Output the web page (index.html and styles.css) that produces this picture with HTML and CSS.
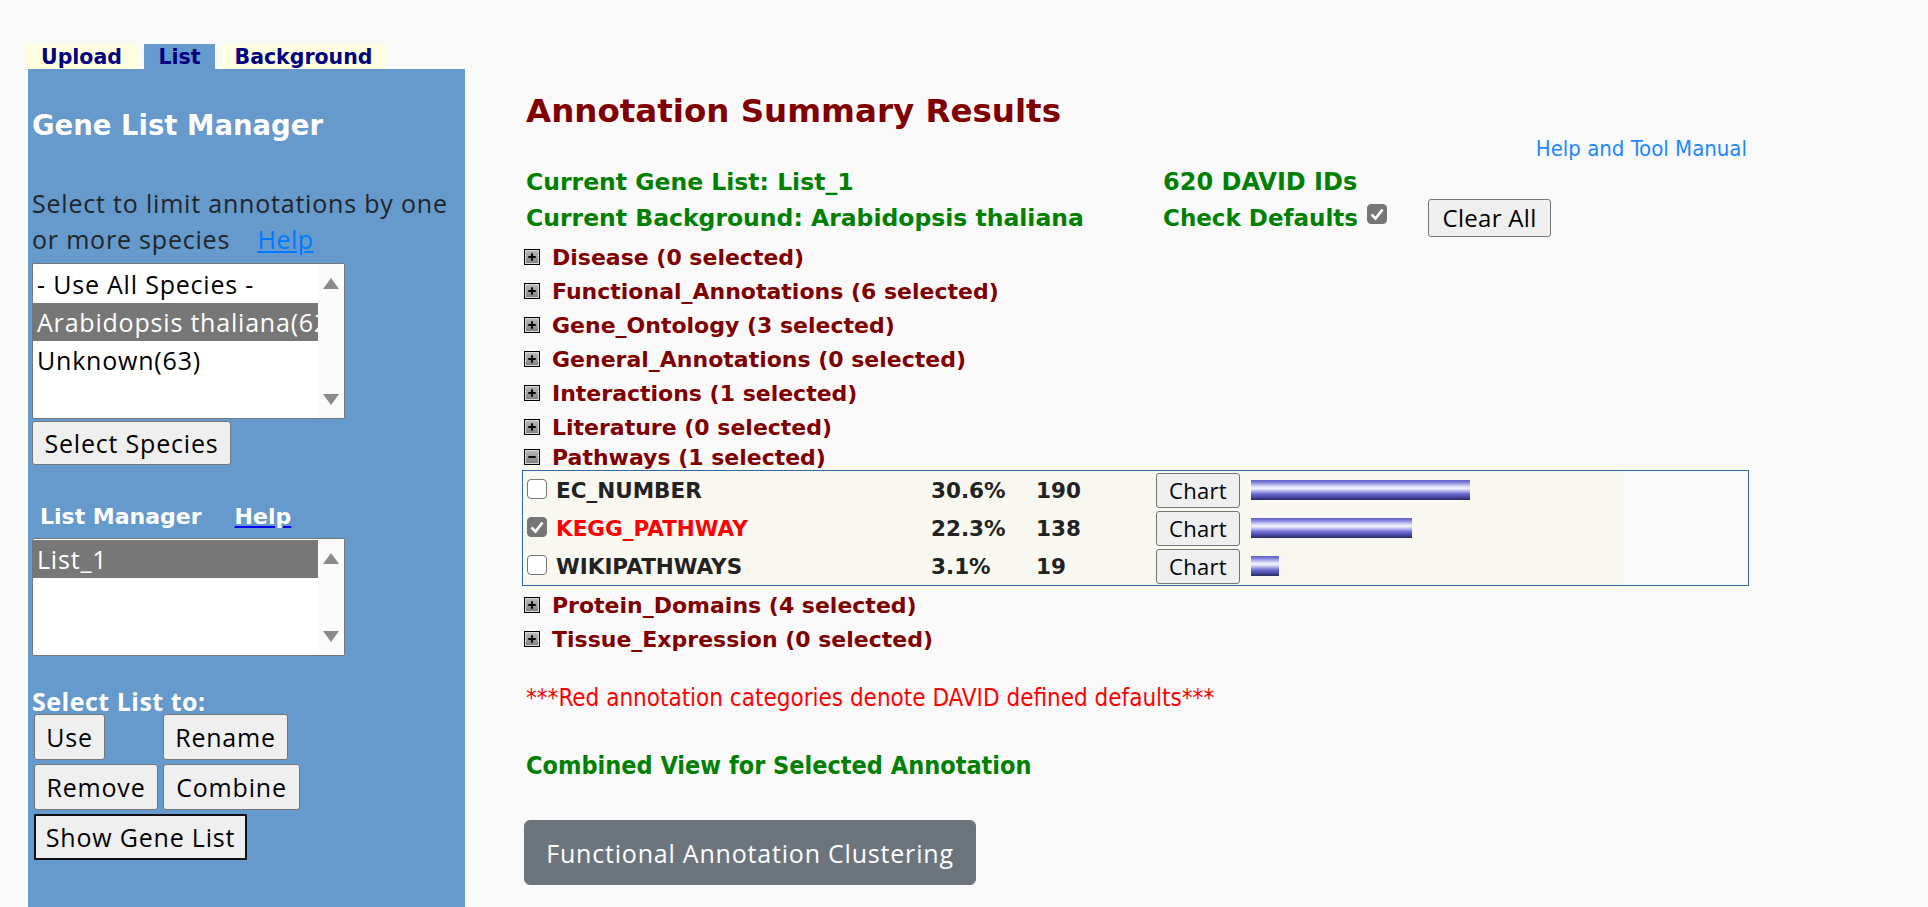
FILE: index.html
```html
<!DOCTYPE html>
<html>
<head>
<meta charset="utf-8">
<title>DAVID Annotation Summary</title>
<link rel="stylesheet" href="styles.css">
</head>
<body>
<div class="page">
  <aside class="side">
    <div class="tabs">
      <span class="tab tab-upload">Upload</span>
      <span class="tab tab-list">List</span>
      <span class="tab tab-bg">Background</span>
    </div>
    <div class="panel">
      <h2 class="panel-title">Gene List Manager</h2>
      <p class="panel-text">Select to limit annotations by one or more species <a class="help-link" href="#">Help</a></p>
      <div class="listbox species-box">
        <div class="lb-options">
          <div class="lb-opt">- Use All Species -</div>
          <div class="lb-opt lb-sel">Arabidopsis thaliana(620)</div>
          <div class="lb-opt">Unknown(63)</div>
        </div>
        <div class="lb-scroll">
          <span class="arrow-up"></span>
          <span class="arrow-down"></span>
        </div>
      </div>
      <button class="btn btn-species">Select Species</button>
      <div class="lm-head"><span class="lm-title">List Manager</span><a class="lm-help" href="#">Help</a></div>
      <div class="listbox list-box">
        <div class="lb-options">
          <div class="lb-opt lb-sel">List_1</div>
        </div>
        <div class="lb-scroll">
          <span class="arrow-up"></span>
          <span class="arrow-down"></span>
        </div>
      </div>
      <div class="sel-title">Select List to:</div>
      <div class="btn-grid">
        <button class="btn">Use</button>
        <button class="btn">Rename</button>
        <button class="btn">Remove</button>
        <button class="btn">Combine</button>
        <button class="btn btn-focus">Show Gene List</button>
      </div>
    </div>
  </aside>

  <main class="main">
    <h1 class="title">Annotation Summary Results</h1>
    <div class="help-row"><a class="manual" href="#">Help and Tool Manual</a></div>
    <div class="info">
      <div class="info-c1">Current Gene List: List_1</div>
      <div class="info-c2">620 DAVID IDs</div>
      <div></div>
      <div class="info-c1">Current Background: Arabidopsis thaliana</div>
      <div class="info-c2 info-check">Check Defaults<span class="cb cb-on cb-def"><svg viewBox="0 0 20 20" width="20" height="20"><path d="M4.5 10.5 L8.5 14.5 L15.5 5.5" fill="none" stroke="#fff" stroke-width="2.6"/></svg></span></div>
      <div><button class="btn btn-clear">Clear All</button></div>
    </div>

    <div class="cats">
      <div class="cat"><span class="pm"><svg viewBox="0 0 13 13" width="13" height="13"><path d="M2.5 6.5h8M6.5 2.5v8" stroke="#000" stroke-width="2"/></svg></span>Disease (0 selected)</div>
      <div class="cat"><span class="pm"><svg viewBox="0 0 13 13" width="13" height="13"><path d="M2.5 6.5h8M6.5 2.5v8" stroke="#000" stroke-width="2"/></svg></span>Functional_Annotations (6 selected)</div>
      <div class="cat"><span class="pm"><svg viewBox="0 0 13 13" width="13" height="13"><path d="M2.5 6.5h8M6.5 2.5v8" stroke="#000" stroke-width="2"/></svg></span>Gene_Ontology (3 selected)</div>
      <div class="cat"><span class="pm"><svg viewBox="0 0 13 13" width="13" height="13"><path d="M2.5 6.5h8M6.5 2.5v8" stroke="#000" stroke-width="2"/></svg></span>General_Annotations (0 selected)</div>
      <div class="cat"><span class="pm"><svg viewBox="0 0 13 13" width="13" height="13"><path d="M2.5 6.5h8M6.5 2.5v8" stroke="#000" stroke-width="2"/></svg></span>Interactions (1 selected)</div>
      <div class="cat"><span class="pm"><svg viewBox="0 0 13 13" width="13" height="13"><path d="M2.5 6.5h8M6.5 2.5v8" stroke="#000" stroke-width="2"/></svg></span>Literature (0 selected)</div>
      <div class="cat cat-open"><span class="pm"><svg viewBox="0 0 13 13" width="13" height="13"><path d="M2.5 6.5h8" stroke="#000" stroke-width="2"/></svg></span>Pathways (1 selected)</div>
      <div class="ptable">
        <div class="prow">
          <span class="cb"></span>
          <span class="pname">EC_NUMBER</span>
          <span class="ppct">30.6%</span>
          <span class="pcnt">190</span>
          <button class="btn btn-chart">Chart</button>
          <span class="bar" style="width:219px"></span>
        </div>
        <div class="prow">
          <span class="cb cb-on"><svg viewBox="0 0 20 20" width="20" height="20"><path d="M4.5 10.5 L8.5 14.5 L15.5 5.5" fill="none" stroke="#fff" stroke-width="2.6"/></svg></span>
          <span class="pname pname-def">KEGG_PATHWAY</span>
          <span class="ppct">22.3%</span>
          <span class="pcnt">138</span>
          <button class="btn btn-chart">Chart</button>
          <span class="bar" style="width:161px"></span>
        </div>
        <div class="prow">
          <span class="cb"></span>
          <span class="pname">WIKIPATHWAYS</span>
          <span class="ppct">3.1%</span>
          <span class="pcnt">19</span>
          <button class="btn btn-chart">Chart</button>
          <span class="bar" style="width:28px"></span>
        </div>
      </div>
      <div class="cat"><span class="pm"><svg viewBox="0 0 13 13" width="13" height="13"><path d="M2.5 6.5h8M6.5 2.5v8" stroke="#000" stroke-width="2"/></svg></span>Protein_Domains (4 selected)</div>
      <div class="cat"><span class="pm"><svg viewBox="0 0 13 13" width="13" height="13"><path d="M2.5 6.5h8M6.5 2.5v8" stroke="#000" stroke-width="2"/></svg></span>Tissue_Expression (0 selected)</div>
    </div>

    <p class="note">***Red annotation categories denote DAVID defined defaults***</p>
    <p class="combined">Combined View for Selected Annotation</p>
    <button class="btn-cluster">Functional Annotation Clustering</button>
  </main>
</div>
</body>
</html>
```

FILE: styles.css
```css
* { box-sizing: border-box; }
html, body { margin: 0; padding: 0; }
body {
  background: #f9f9f9;
  font-family: "Open Sans", "Noto Sans", sans-serif;
  color: #212529;
  overflow: hidden;
}
.page {
  display: flex;
  align-items: stretch;
  min-height: 907px;
  padding: 44px 0 0 26px;
}

/* ---------- sidebar ---------- */
.side {
  width: 439px;
  flex: none;
  display: flex;
  flex-direction: column;
}
.tabs {
  display: flex;
  gap: 7px;
  height: 25px;
}
.tab {
  font-family: "DejaVu Sans", sans-serif;
  font-weight: bold;
  font-size: 20.5px;
  line-height: 26px;
  color: #000080;
  background: #ffffe0;
  text-align: center;
}
.tab-upload { width: 111px; }
.tab-list { width: 71px; background: #6699cc; }
.tab-bg { width: 163px; }
.panel {
  flex: 1;
  margin-left: 2px;
  width: 437px;
  background: #6699cc;
  padding: 0 4px;
  display: flex;
  flex-direction: column;
  align-items: flex-start;
}
.panel-title {
  margin: 40px 0 0;
  font-family: "DejaVu Sans", sans-serif;
  font-weight: bold;
  font-size: 27.5px;
  line-height: 32px;
  color: #fff;
}
.panel-text {
  margin: 44px 0 0;
  font-size: 25px;
  letter-spacing: 0.8px;
  line-height: 36px;
  color: #212529;
  width: 430px;
}
.help-link {
  color: #007bff;
  margin-left: 20px;
  letter-spacing: 0.5px;
}
.listbox {
  display: flex;
  width: 313px;
  background: #fff;
  border: 1px solid #767676;
  border-radius: 2px;
  overflow: hidden;
}
.species-box { margin-top: 6px; height: 156px; }
.list-box { margin-top: 7px; height: 118px; }
.lb-options {
  flex: 1;
  min-width: 0;
  padding-top: 1px;
  overflow: hidden;
}
.lb-opt {
  height: 38px;
  line-height: 38px;
  font-size: 25px;
  letter-spacing: 0.8px;
  padding-left: 4px;
  color: #000;
  white-space: nowrap;
  overflow: hidden;
}
.lb-sel { background: #777; color: #fff; }
.lb-scroll {
  width: 26px;
  flex: none;
  background: #fafafa;
  display: flex;
  flex-direction: column;
  justify-content: space-between;
  align-items: center;
  padding: 14px 0 13px;
}
.arrow-up {
  width: 0; height: 0;
  border-left: 8px solid transparent;
  border-right: 8px solid transparent;
  border-bottom: 11px solid #8a8a8a;
}
.arrow-down {
  width: 0; height: 0;
  border-left: 8px solid transparent;
  border-right: 8px solid transparent;
  border-top: 11px solid #8a8a8a;
}
.btn {
  font-family: "Open Sans", "Noto Sans", sans-serif;
  font-size: 25px;
  letter-spacing: 0.8px;
  color: #000;
  background: #efefef;
  border: 1px solid #767676;
  border-radius: 3px;
  height: 46px;
  padding: 0;
  margin: 0;
}
.btn-species { margin-top: 2px; height: 44px; width: 199px; }
.lm-head {
  margin-top: 38px;
  height: 28px;
  line-height: 28px;
  padding-left: 8px;
  font-family: "DejaVu Sans", sans-serif;
  font-weight: bold;
  font-size: 22px;
  color: #fff;
}
.lm-help {
  color: #fff;
  margin-left: 33px;
  text-decoration-color: #0000ee;
}
.sel-title {
  margin-top: 32px;
  height: 26px;
  line-height: 26px;
  font-weight: bold;
  font-size: 25px;
  letter-spacing: 0.5px;
  color: #fff;
}
.btn-grid {
  display: grid;
  grid-template-columns: 125px auto;
  column-gap: 4px;
  row-gap: 4px;
  margin-left: 2px;
  justify-items: start;
}
.btn-grid .btn:nth-child(1) { width: 71px; }
.btn-grid .btn:nth-child(2) { width: 125px; }
.btn-grid .btn:nth-child(3) { width: 124px; }
.btn-grid .btn:nth-child(4) { width: 137px; }
.btn-focus {
  grid-column: 1 / span 2;
  width: 213px;
  border: 2px solid #111;
  border-radius: 1px;
}

/* ---------- main ---------- */
.main {
  margin-left: 61px;
  width: 1227px;
  flex: none;
}
.title {
  margin: 47px 0 0;
  font-family: "DejaVu Sans", sans-serif;
  font-weight: bold;
  font-size: 32.5px;
  line-height: 40px;
  color: #800000;
}
.help-row {
  text-align: right;
  height: 30px;
  line-height: 30px;
  margin-top: 3px;
  padding-right: 6px;
}
.manual {
  font-family: "DejaVu Sans Condensed", "DejaVu Sans", sans-serif;
  font-stretch: condensed;
  font-size: 22px;
  color: #1e88ff;
  text-decoration: none;
}
.info {
  display: grid;
  grid-template-columns: 637px 265px auto;
  grid-auto-rows: 36px;
  align-items: center;
  font-family: "DejaVu Sans", sans-serif;
  font-weight: bold;
  color: #008000;
}
.info-c1 { font-size: 23.5px; }
.info-c2 { font-size: 24px; display: flex; align-items: center; }
.info-check { font-size: 23px; }
.btn-clear {
  height: 38px;
  width: 123px;
  font-size: 24px;
  letter-spacing: 0.3px;
  margin-top: -1px;
}
.cats {
  margin-top: 4px;
  margin-left: -3px;
}
.cat {
  height: 34px;
  display: flex;
  align-items: center;
  font-family: "DejaVu Sans", sans-serif;
  font-weight: bold;
  font-size: 22px;
  color: #800000;
  white-space: pre;
}
.cat-open { height: 26px; }
.pm {
  width: 16px;
  height: 16px;
  margin: 0 12px 0 1px;
  border: 1px solid #000;
  box-shadow: inset 0 0 0 1px #d8d8d8;
  background: linear-gradient(#bdbdbd, #7d7d7d);
  display: inline-flex;
  align-items: center;
  justify-content: center;
  flex: none;
}
.pm svg { width: 12px; height: 12px; }

.ptable {
  width: 1227px;
  border: 1px solid #336699;
  margin: 0 0 2px -1px;
}
.prow {
  width: 1101px;
  height: 38px;
  background: #f8f8f0;
  display: flex;
  align-items: center;
  padding-left: 4px;
  font-family: "DejaVu Sans", sans-serif;
  font-weight: bold;
  font-size: 21.5px;
  color: #222;
}
.cb {
  width: 20px;
  height: 20px;
  border: 1px solid #767676;
  border-radius: 4px;
  background: #fff;
  display: inline-flex;
  flex: none;
}
.cb-on { background: #767676; border-color: #767676; }
.cb-on svg { margin: -1px; }
.prow .cb { margin-top: -3px; }
.cb-def { margin-left: 9px; margin-top: -8px; }
.pname { width: 375px; margin-left: 9px; }
.pname-def { color: #ff0000; }
.ppct { width: 105px; }
.pcnt { width: 120px; }
.btn-chart {
  height: 35px;
  width: 84px;
  font-size: 22px;
  letter-spacing: 0.3px;
}
.bar {
  height: 20px;
  margin-left: 11px;
  background: linear-gradient(to bottom, #5b5bc8 0%, #8c8ce0 15%, #dcdcf8 32%, #f4f4ff 42%, #b4b4ec 55%, #6a6ad0 70%, #4a4aa8 85%, #28285a 100%);
}
.note {
  margin: 27px 0 0;
  font-family: "DejaVu Sans Condensed", "DejaVu Sans", sans-serif;
  font-stretch: condensed;
  font-size: 24px;
  line-height: 30px;
  color: #ff0000;
}
.combined {
  margin: 38px 0 0;
  font-family: "DejaVu Sans Condensed", "DejaVu Sans", sans-serif;
  font-stretch: condensed;
  font-weight: bold;
  font-size: 25px;
  line-height: 30px;
  color: #008000;
}
.btn-cluster {
  margin-top: 39px;
  margin-left: -2px;
  width: 452px;
  height: 65px;
  background: #6c757d;
  border: 1px solid #6c757d;
  border-radius: 6px;
  color: #fff;
  font-family: "Open Sans", "Noto Sans", sans-serif;
  font-size: 25px;
  letter-spacing: 0.8px;
  padding: 0;
}
```
